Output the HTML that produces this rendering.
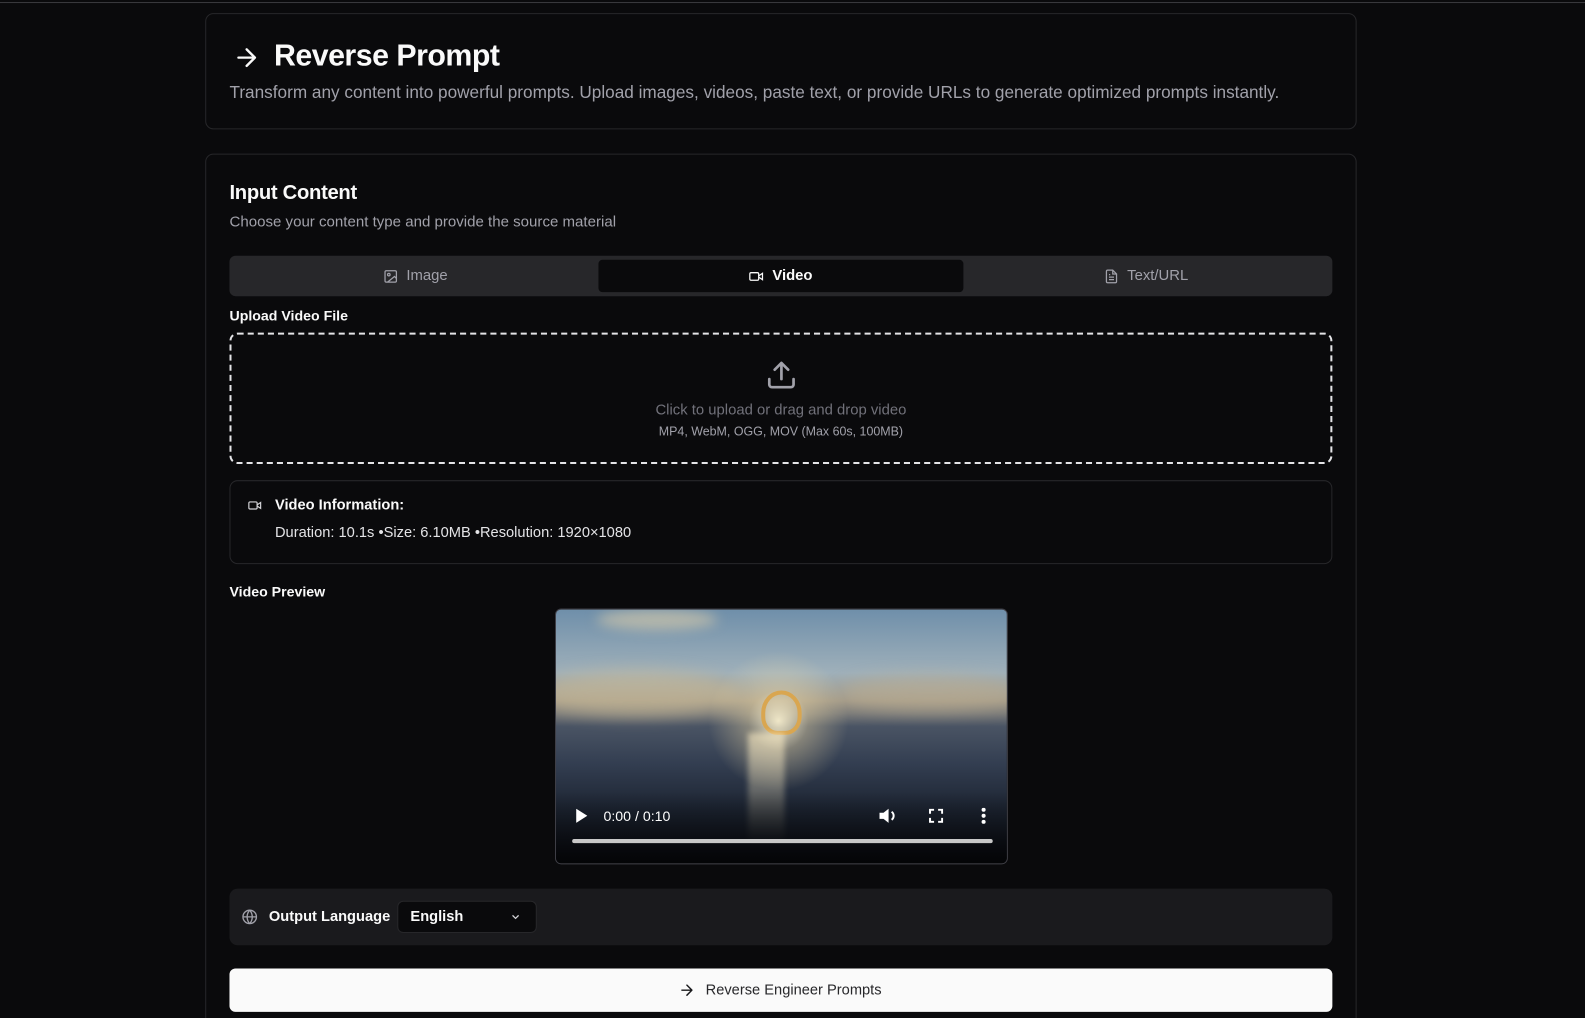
<!DOCTYPE html>
<html><head><meta charset="utf-8">
<style>
*{box-sizing:border-box;margin:0;padding:0}
html,body{width:1585px;height:1018px;overflow:hidden;background:#0a0a0c}
body{font-family:"Liberation Sans",sans-serif;color:#fafafa;position:relative}
#wrap{position:absolute;left:0;top:0;width:1568px;height:1007px;transform:scale(1.0109);transform-origin:0 0}
.topline{position:absolute;left:0;top:2px;width:1600px;height:1px;background:#3a3a3d}
.card{position:absolute;left:203px;width:1139px;border:1px solid #27272a;border-radius:8px;background:#0a0a0c}
.abs{position:absolute}
svg{display:block}
</style></head><body>
<div id="wrap">
<div class="topline"></div>
<div class="card" style="top:13px;height:115px">
  <svg class="abs" style="left:26px;top:29px" width="28" height="28" viewBox="0 0 24 24" fill="none" stroke="#fafafa" stroke-width="2" stroke-linecap="round" stroke-linejoin="round"><path d="M5 12h14M12 5l7 7-7 7"/></svg>
  <div class="abs" style="left:67px;top:25px;font-size:30px;font-weight:bold;letter-spacing:-0.5px">Reverse Prompt</div>
  <div class="abs" style="left:23px;top:68px;font-size:17px;color:#a1a1aa">Transform any content into powerful prompts. Upload images, videos, paste text, or provide URLs to generate optimized prompts instantly.</div>
</div>
<div class="card" style="top:152px;height:880px">
  <div class="abs" style="left:23px;top:27px;font-size:20px;font-weight:bold;letter-spacing:-0.3px">Input Content</div>
  <div class="abs" style="left:23px;top:59px;font-size:14.9px;color:#a1a1aa">Choose your content type and provide the source material</div>
  <div class="abs" style="left:23px;top:100px;width:1091px;height:40px;background:#27272a;border-radius:6px">
    <div class="abs" style="left:152px;top:12px;display:flex;align-items:center;gap:8px;color:#a1a1aa;font-size:14.7px">
      <svg width="15" height="15" viewBox="0 0 24 24" fill="none" stroke="#a1a1aa" stroke-width="2"><rect x="3" y="3" width="18" height="18" rx="2"/><circle cx="9" cy="9" r="2"/><path d="M21 15l-3-3-11 9"/></svg>Image</div>
    <div class="abs" style="left:365px;top:4px;width:361px;height:32px;background:#0a0a0c;border-radius:4px"></div>
    <div class="abs" style="left:513px;top:12px;display:flex;align-items:center;gap:8px;color:#fafafa;font-size:14.7px;font-weight:bold">
      <svg width="16" height="15" viewBox="0 0 24 24" fill="none" stroke="#fafafa" stroke-width="2"><rect x="2" y="6" width="14" height="12" rx="2"/><path d="M16 13l6 4V7l-6 4"/></svg>Video</div>
    <div class="abs" style="left:865px;top:12px;display:flex;align-items:center;gap:8px;color:#a1a1aa;font-size:14.7px">
      <svg width="15" height="15" viewBox="0 0 24 24" fill="none" stroke="#a1a1aa" stroke-width="2"><path d="M14 2H6a2 2 0 0 0-2 2v16a2 2 0 0 0 2 2h12a2 2 0 0 0 2-2V8z"/><path d="M14 2v6h6M16 13H8M16 17H8M10 9H8"/></svg>Text/URL</div>
  </div>
  <div class="abs" style="left:23px;top:151px;font-size:14px;font-weight:bold">Upload Video File</div>
  <div class="abs" style="left:23px;top:176px;width:1091px;height:130px;border:2px dashed #e4e4e7;border-radius:8px">
    <svg class="abs" style="left:528px;top:24px" width="32" height="32" viewBox="0 0 24 24" fill="none" stroke="#a1a1aa" stroke-width="2" stroke-linecap="round" stroke-linejoin="round"><path d="M21 15v4a2 2 0 0 1-2 2H5a2 2 0 0 1-2-2v-4M17 8l-5-5-5 5M12 3v12"/></svg>
    <div class="abs" style="left:0;width:1087px;top:67px;text-align:center;font-size:14.7px;color:#71717a">Click to upload or drag and drop video</div>
    <div class="abs" style="left:0;width:1087px;top:89px;text-align:center;font-size:12.3px;color:#a1a1aa">MP4, WebM, OGG, MOV (Max 60s, 100MB)</div>
  </div>
  <div class="abs" style="left:23px;top:322px;width:1091px;height:83px;border:1px solid #27272a;border-radius:8px">
    <svg class="abs" style="left:16px;top:17px" width="16" height="14" viewBox="0 0 24 24" fill="none" stroke="#d4d4d8" stroke-width="2"><rect x="2" y="6" width="14" height="12" rx="2"/><path d="M16 13l6 4V7l-6 4"/></svg>
    <div class="abs" style="left:44px;top:16px;font-size:14.5px;font-weight:bold">Video Information:</div>
    <div class="abs" style="left:44px;top:43px;font-size:14.5px;color:#e4e4e7">Duration: 10.1s •Size: 6.10MB •Resolution: 1920×1080</div>
  </div>
  <div class="abs" style="left:23px;top:424px;font-size:14px;font-weight:bold">Video Preview</div>
  <div class="abs" style="left:345px;top:449px;width:448px;height:253px;border:1px solid #3f3f46;border-radius:6px;overflow:hidden;background:linear-gradient(180deg,#6f8faa 0%,#9fb0ba 25%,#a09888 36%,#7c7c7a 41%,#4a5464 46%,#343f52 60%,#1e2634 78%,#0c0e14 100%)">
    <div class="abs" style="left:-20px;top:60px;width:200px;height:45px;border-radius:50%;background:rgba(200,185,150,.6);filter:blur(8px)"></div>
    <div class="abs" style="left:280px;top:65px;width:180px;height:35px;border-radius:50%;background:rgba(190,175,145,.55);filter:blur(8px)"></div>
    <div class="abs" style="left:40px;top:0;width:120px;height:20px;border-radius:50%;background:rgba(220,205,170,.6);filter:blur(6px)"></div>
    <div class="abs" style="left:150px;top:40px;width:140px;height:140px;border-radius:50%;background:radial-gradient(circle,rgba(255,245,210,.9) 0%,rgba(255,230,170,.35) 30%,rgba(255,220,160,0) 70%)"></div>
    <div class="abs" style="left:203px;top:80px;width:40px;height:44px;border:4px solid #d9a650;border-radius:50% 50% 40% 40%"></div>
    <div class="abs" style="left:190px;top:122px;width:36px;height:110px;background:linear-gradient(180deg,rgba(255,240,200,.6),rgba(255,230,180,0));filter:blur(3px)"></div>
    <div class="abs" style="left:0;top:180px;width:448px;height:73px;background:linear-gradient(180deg,rgba(0,0,0,0),rgba(0,0,0,.7))"></div>
    <svg class="abs" style="left:19px;top:197px" width="12" height="14" viewBox="0 0 12 14"><path d="M1 0L12 7 1 14z" fill="#fff"/></svg>
    <div class="abs" style="left:47px;top:196px;font-size:14px;color:#fff">0:00 / 0:10</div>
    <svg class="abs" style="left:320px;top:196px" width="18" height="16" viewBox="0 0 18 16"><path d="M0 5h4l5-4v14l-5-4H0z" fill="#fff"/><path d="M12 4a5 5 0 0 1 0 8" stroke="#fff" stroke-width="2" fill="none"/></svg>
    <svg class="abs" style="left:369px;top:197px" width="14" height="14" viewBox="0 0 14 14" fill="none" stroke="#fff" stroke-width="2"><path d="M1 5V1h4M9 1h4v4M13 9v4H9M5 13H1V9"/></svg>
    <svg class="abs" style="left:420px;top:196px" width="6" height="16" viewBox="0 0 6 16" fill="#fff"><circle cx="3" cy="2" r="2"/><circle cx="3" cy="8" r="2"/><circle cx="3" cy="14" r="2"/></svg>
    <div class="abs" style="left:16px;top:227px;width:416px;height:4px;border-radius:2px;background:#c8c8c8"></div>
  </div>
  <div class="abs" style="left:23px;top:726px;width:1091px;height:56px;background:#1a1a1d;border-radius:8px">
    <svg class="abs" style="left:12px;top:20px" width="16" height="16" viewBox="0 0 24 24" fill="none" stroke="#a1a1aa" stroke-width="2"><circle cx="12" cy="12" r="10"/><path d="M2 12h20M12 2a15 15 0 0 1 0 20M12 2a15 15 0 0 0 0 20"/></svg>
    <div class="abs" style="left:39px;top:20px;font-size:14.5px;font-weight:bold">Output Language</div>
    <div class="abs" style="left:166px;top:12px;width:138px;height:32px;background:#0a0a0c;border:1px solid #27272a;border-radius:6px">
      <div class="abs" style="left:12px;top:7px;font-size:14.5px;font-weight:bold">English</div>
      <svg class="abs" style="left:110px;top:9px" width="12" height="12" viewBox="0 0 24 24" fill="none" stroke="#d4d4d8" stroke-width="2.5"><path d="M6 9l6 6 6-6"/></svg>
    </div>
  </div>
  <div class="abs" style="left:23px;top:805px;width:1091px;height:43px;background:#fafafa;border-radius:6px">
    <svg class="abs" style="left:444px;top:13px" width="17" height="17" viewBox="0 0 24 24" fill="none" stroke="#18181b" stroke-width="2" stroke-linecap="round" stroke-linejoin="round"><path d="M5 12h14M12 5l7 7-7 7"/></svg>
    <div class="abs" style="left:471px;top:14px;font-size:14.5px;color:#27272a">Reverse Engineer Prompts</div>
  </div>
</div>
</div>
</body></html>
